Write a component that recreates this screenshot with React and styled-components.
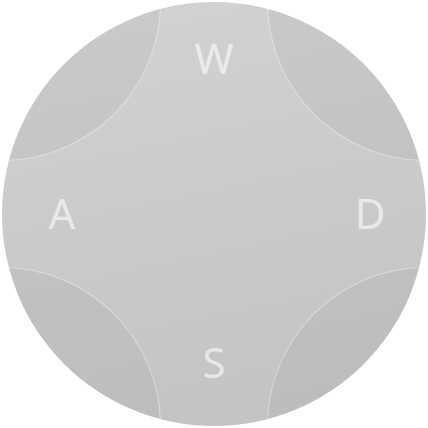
import React from "react";
import styled, { createGlobalStyle } from "styled-components";

const GlobalStyle = createGlobalStyle`
    html, body {
        margin: 0;
        padding: 0;
        background: #ffffff;
    }
    body {
        font-family: "Noto Sans", "Open Sans", sans-serif;
    }
`;

export default function App() {
    return (
        <>
            <GlobalStyle />
            <Page>
                <Pad>
                    <Corner $v="top" $h="left" />
                    <Corner $v="top" $h="right" />
                    <Corner $v="bottom" $h="left" />
                    <Corner $v="bottom" $h="right" />

                    <KeyRow $center>
                        <Key>W</Key>
                    </KeyRow>
                    <KeyRow $middle>
                        <Key>A</Key>
                        <Key>D</Key>
                    </KeyRow>
                    <KeyRow $center>
                        <Key>S</Key>
                    </KeyRow>
                </Pad>
            </Page>
        </>
    );
}

const Page = styled.div`
    width: 428px;
    height: 428px;
    display: flex;
    align-items: center;
    justify-content: center;
`;

// round d-pad, corners are darker quarter discs
const Pad = styled.div`
    position: relative;
    box-sizing: border-box;
    width: 424px;
    height: 424px;
    border-radius: 50%;
    overflow: hidden;
    background: linear-gradient(168deg, #d3d3d3 0%, #cbcbcb 45%, #c2c2c2 100%);
    display: flex;
    flex-direction: column;
    justify-content: space-between;
    padding: 35px 0 43px;
`;

const Corner = styled.div`
    position: absolute;
    box-sizing: border-box;
    width: 318px;
    height: 318px;
    border-radius: 50%;
    ${({ $v }) => $v}: -159px;
    ${({ $h }) => $h}: -159px;
    background: rgba(0, 0, 0, 0.035);
    border: 1.5px solid rgba(255, 255, 255, 0.42);
`;

const KeyRow = styled.div`
    position: relative;
    display: flex;
    justify-content: ${({ $center }) => ($center ? "center" : "space-between")};
    padding: ${({ $middle }) => ($middle ? "0 35px 0 39px" : "0")};
    margin-top: ${({ $middle }) => ($middle ? "6px" : "0")};
`;

const Key = styled.span`
    width: 42px;
    height: 42px;
    line-height: 42px;
    text-align: center;
    font-size: 42px;
    font-weight: 400;
    color: rgba(255, 255, 255, 0.6);
    user-select: none;
`;
